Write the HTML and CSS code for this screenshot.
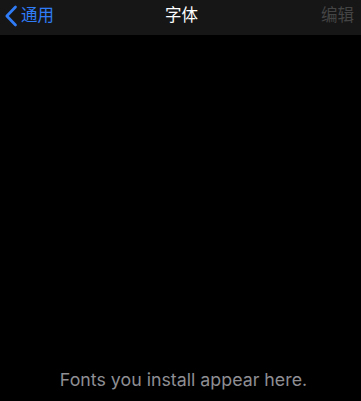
FILE: index.html
```html
<!DOCTYPE html>
<html>
<head>
<meta charset="utf-8">
<link rel="stylesheet" href="styles.css">
</head>
<body>
<div class="screen">
  <header class="nav">
    <div class="back">
      <svg class="chev" width="14" height="22" viewBox="0 0 14 22"><path d="M11.5 2 L2.8 11 L11.5 20" fill="none" stroke="#2f7cf6" stroke-width="2.7" stroke-linecap="round" stroke-linejoin="round"/></svg>
      <span class="back-label">通用</span>
    </div>
    <div class="title">字体</div>
    <div class="edit">编辑</div>
  </header>
  <main class="content">
    <p class="empty">Fonts you install appear here.</p>
  </main>
</div>
</body>
</html>
```
FILE: styles.css
```css
html, body {
  margin: 0;
  padding: 0;
  background: #000;
}
.screen {
  width: 361px;
  height: 401px;
  display: flex;
  flex-direction: column;
  font-family: "Noto Sans CJK SC", "Liberation Sans", sans-serif;
}
.nav {
  height: 35px;
  background: #161616;
  display: grid;
  grid-template-columns: 1fr auto 1fr;
  align-items: center;
}
.back {
  display: flex;
  align-items: center;
  padding-left: 4px;
  gap: 3px;
  color: #2f7cf6;
  font-size: 16.5px;
}
.chev { display: block; margin-top: -4px; }
.back-label { line-height: 1; margin-top: -6px; }
.title {
  color: #fff;
  font-size: 16.5px;
  line-height: 1;
  margin-top: -6px;
  padding-left: 2px;
}
.edit {
  justify-self: end;
  padding-right: 7px;
  color: #444;
  font-size: 16.5px;
  line-height: 1;
  margin-top: -6px;
}
.content {
  flex: 1;
  display: flex;
  flex-direction: column;
  justify-content: flex-end;
  align-items: center;
}
.empty {
  margin: 0 0 11px;
  padding-left: 6px;
  color: #8e8e93;
  font-family: "Inter", "Liberation Sans", sans-serif;
  font-size: 17.8px;
  line-height: 20px;
}
```
